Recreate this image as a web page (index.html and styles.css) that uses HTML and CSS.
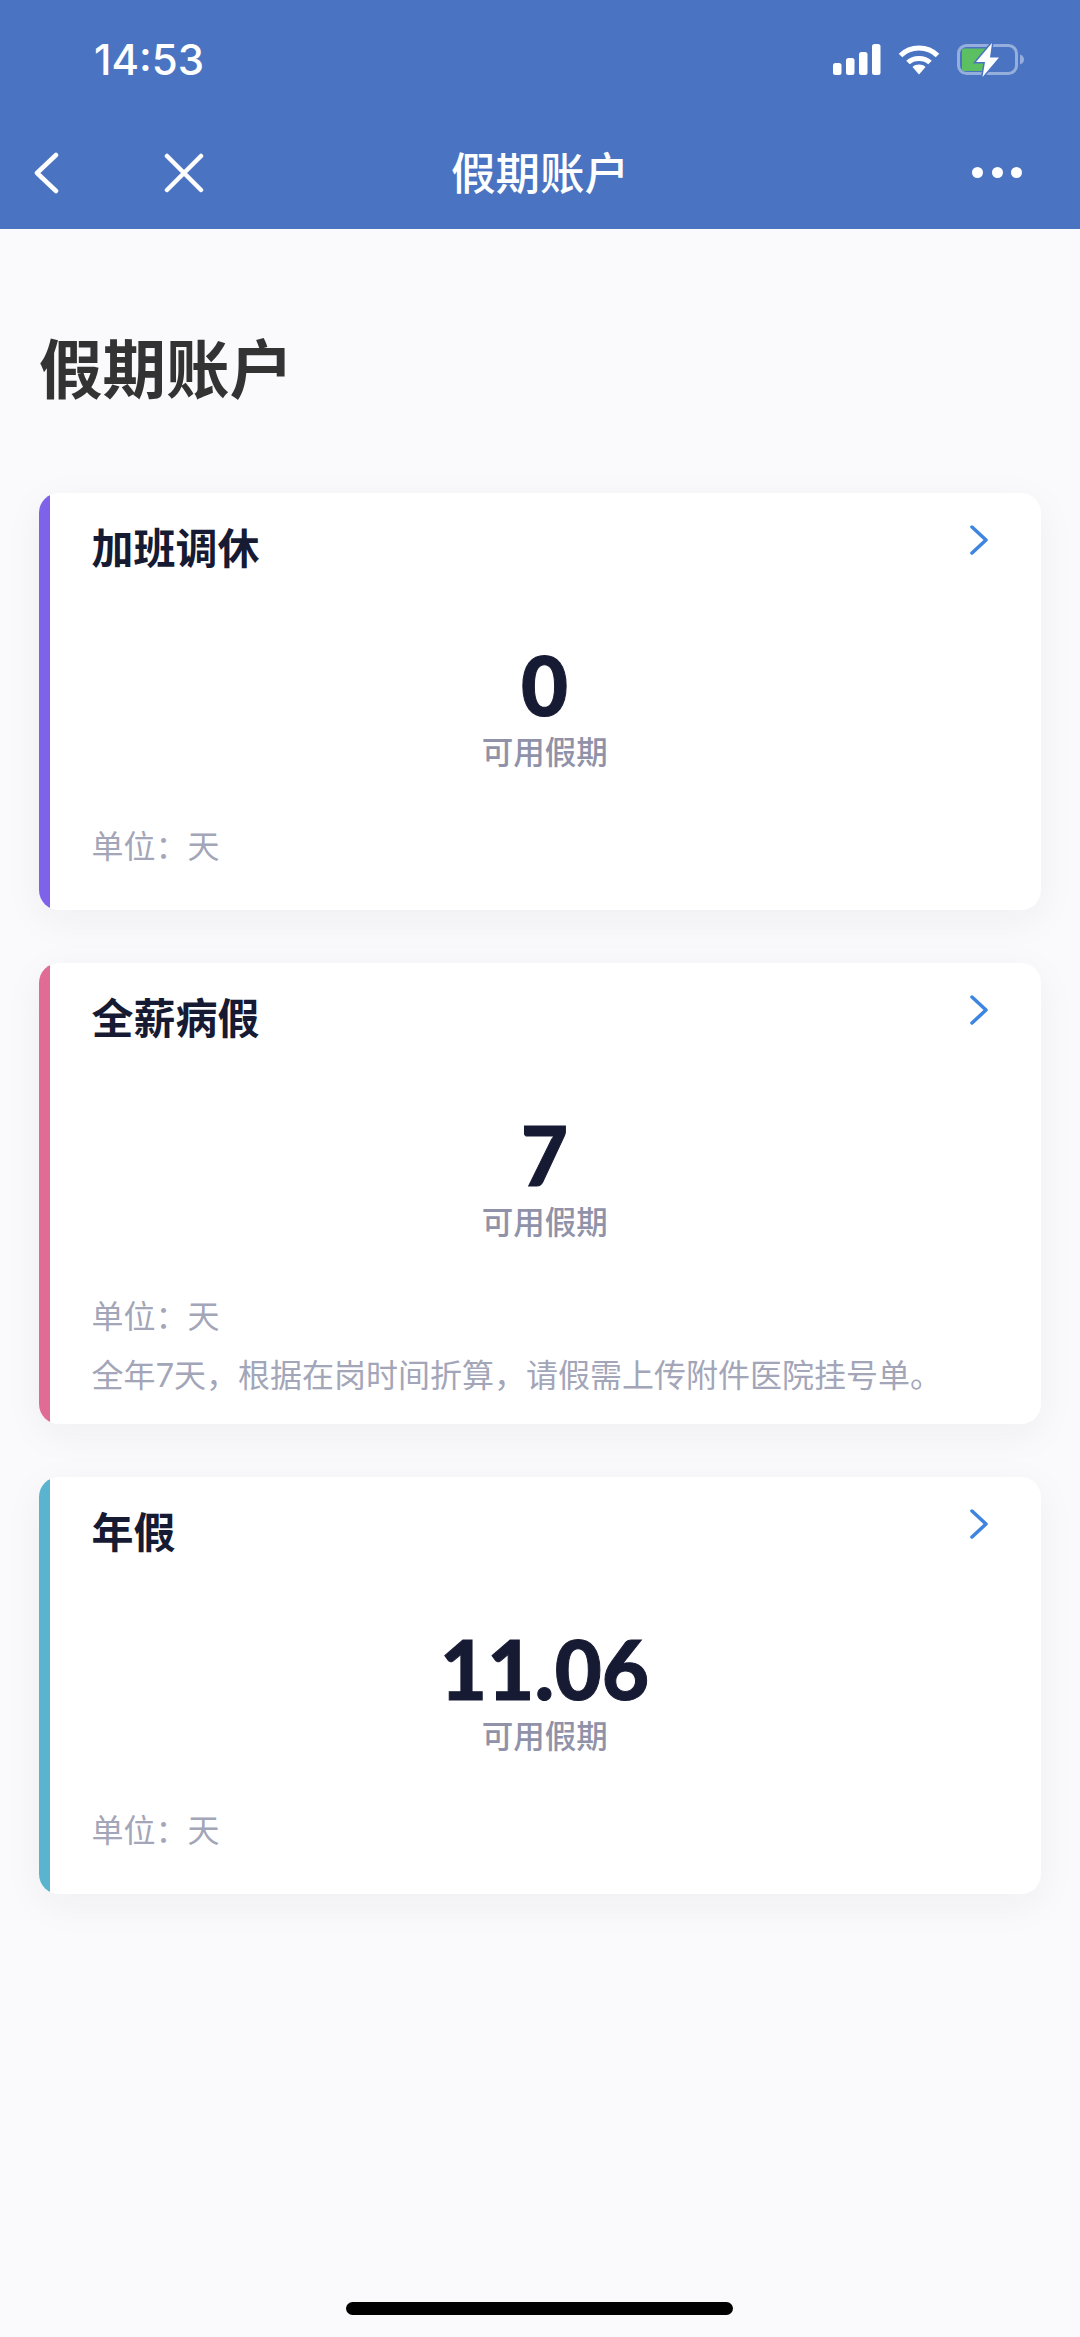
FILE: index.html
```html
<!DOCTYPE html>
<html lang="zh-CN">
<head>
<meta charset="utf-8">
<title>假期账户</title>
<link rel="stylesheet" href="styles.css">
</head>
<body>
<header class="head">
  <div class="status">
    <span class="time">14:53</span>
    <div class="status-icons">
      <svg class="ic-signal" width="48" height="31" viewBox="0 0 48 31" fill="#fff"><rect x="0" y="19" width="8.500" height="12" rx="2.500"/><rect x="13" y="14" width="8.500" height="17" rx="2.500"/><rect x="26" y="8" width="8.500" height="23" rx="2.500"/><rect x="39" y="0" width="8.500" height="31" rx="2.500"/></svg>
      <svg class="ic-wifi" width="42" height="31" viewBox="0 0 42 31" fill="none" stroke="#fff" stroke-width="5"><path d="M2.500 11.500C12.500 1.500 29.500 1.500 39.500 11.500"/><path d="M10 18.500C15.500 13 26.500 13 32 18.500"/><path d="M14.500 23L21 30.500L27.500 23C24 19.800 18 19.800 14.500 23Z" fill="#fff" stroke="none"/></svg>
      <svg class="ic-batt" width="70" height="35" viewBox="0 0 70 35"><rect x="1.500" y="3.500" width="58" height="28" rx="8" fill="none" stroke="#fff" stroke-opacity=".42" stroke-width="3"/><path d="M63 12.500C66 13.500 67 15.500 67 17.500C67 19.500 66 21.500 63 22.500Z" fill="#fff" fill-opacity=".42"/><path d="M7 6.500H33L26 29H7C5.900 29 5 28.100 5 27V8.500C5 7.400 5.900 6.500 7 6.500Z" fill="#5cc062"/><path class="bolt" d="M35 1L19 20H28L25.500 35L42 15.500H33Z"/></svg>
    </div>
  </div>
  <nav class="nav">
    <div class="nav-left">
      <svg width="28" height="42" viewBox="0 0 28 42" fill="none" stroke="#fff" stroke-width="4.500" stroke-linecap="round" stroke-linejoin="round"><path d="M24 3L5 21L24 39"/></svg>
      <svg width="40" height="40" viewBox="0 0 40 40" fill="none" stroke="#fff" stroke-width="4.500" stroke-linecap="round"><path d="M3 3L37 37M37 3L3 37"/></svg>
    </div>
    <h2 class="nav-title">假期账户</h2>
    <div class="nav-more"><i></i><i></i><i></i></div>
  </nav>
</header>
<main class="main">
  <h1 class="page-title">假期账户</h1>
  <section class="card">
    <div class="bar bar-purple"></div>
    <div class="card-body">
      <div class="card-top">
        <h3 class="card-title">加班调休</h3>
        <svg class="chev" width="20" height="30" viewBox="0 0 20 30" fill="none" stroke="#3d85e0" stroke-width="3.500" stroke-linecap="round" stroke-linejoin="round"><path d="M3 2L17 15L3 28"/></svg>
      </div>
      <div class="stat"><div class="num">0</div><div class="label">可用假期</div></div>
      <div class="foot"><p>单位：天</p></div>
    </div>
  </section>
  <section class="card">
    <div class="bar bar-pink"></div>
    <div class="card-body">
      <div class="card-top">
        <h3 class="card-title">全薪病假</h3>
        <svg class="chev" width="20" height="30" viewBox="0 0 20 30" fill="none" stroke="#3d85e0" stroke-width="3.500" stroke-linecap="round" stroke-linejoin="round"><path d="M3 2L17 15L3 28"/></svg>
      </div>
      <div class="stat"><div class="num">7</div><div class="label">可用假期</div></div>
      <div class="foot"><p>单位：天</p><p>全年7天，根据在岗时间折算，请假需上传附件医院挂号单。</p></div>
    </div>
  </section>
  <section class="card">
    <div class="bar bar-teal"></div>
    <div class="card-body">
      <div class="card-top">
        <h3 class="card-title">年假</h3>
        <svg class="chev" width="20" height="30" viewBox="0 0 20 30" fill="none" stroke="#3d85e0" stroke-width="3.500" stroke-linecap="round" stroke-linejoin="round"><path d="M3 2L17 15L3 28"/></svg>
      </div>
      <div class="stat"><div class="num">11.06</div><div class="label">可用假期</div></div>
      <div class="foot"><p>单位：天</p></div>
    </div>
  </section>
</main>
<div class="home-bar"><span></span></div>
</body>
</html>
```

FILE: styles.css
```css
* { box-sizing: border-box; margin: 0; padding: 0; }
html, body { height: 100%; }
body {
  display: flex;
  flex-direction: column;
  height: 2337px;
  background: #fafafc;
  font-family: Lato, "Noto Sans CJK SC", sans-serif;
  overflow: hidden;
}
.head { background: #4a74c2; height: 229px; color: #fff; flex: none; }
.status {
  height: 118px;
  display: flex;
  justify-content: space-between;
  align-items: center;
  padding: 0 53px 0 94px;
}
.time { font-family: Inter, sans-serif; font-size: 42px; font-weight: 500; color: #fff; }
.status-icons { display: flex; align-items: center; gap: 17px; }
.bolt { fill: #fff; stroke: #4a74c2; stroke-width: 3px; paint-order: stroke; }
.nav {
  height: 111px;
  display: grid;
  grid-template-columns: 1fr auto 1fr;
  align-items: center;
  padding: 0 58px 2px 32px;
}
.nav-left { display: flex; align-items: center; gap: 104px; }
.nav-title { font-size: 44.500px; font-weight: 500; line-height: 60px; text-align: center; margin-left: 26px; }
.nav-more { display: flex; justify-content: flex-end; gap: 8.500px; }
.nav-more i { width: 11px; height: 11px; border-radius: 50%; background: #fff; display: block; }
.main { flex: 1; padding: 0 39px; }
.page-title {
  font-size: 63.500px;
  font-weight: 700;
  color: #333;
  line-height: 86px;
  margin: 97px 0 81px;
}
.card {
  display: flex;
  background: #fff;
  border-radius: 20px;
  overflow: hidden;
  box-shadow: 0 10px 40px rgba(30, 35, 60, .05);
  margin-bottom: 53px;
}
.bar { width: 11px; flex: none; }
.bar-purple { background: #7f62ea; }
.bar-pink { background: #e06c95; }
.bar-teal { background: #5ab4cf; }
.card-body { flex: 1; padding: 30px 52px 27.500px 41.500px; }
.card-top { display: flex; justify-content: space-between; align-items: flex-start; height: 60px; }
.card-title { font-size: 42px; font-weight: 700; line-height: 50px; color: #161a33; }
.chev { margin-top: 2px; }
.stat { margin-top: 52px; text-align: center; margin-left: 9px; }
.num { font-size: 81px; font-weight: 900; line-height: 100px; color: #161a33; letter-spacing: .5px; -webkit-text-stroke: 1px #161a33; }
.label { font-size: 31.500px; font-weight: 500; line-height: 40px; color: #8f92a8; margin-top: -3px; }
.foot { margin-top: 51.500px; min-height: 59px; display: flex; flex-direction: column; gap: 15px; }
.foot p { font-size: 32px; line-height: 44px; color: #a3a5b8; font-weight: 400; }
.home-bar { height: 35px; flex: none; display: flex; justify-content: center; }
.home-bar span { width: 387px; height: 13px; border-radius: 7px; background: #000; margin-left: -1px; }
```
